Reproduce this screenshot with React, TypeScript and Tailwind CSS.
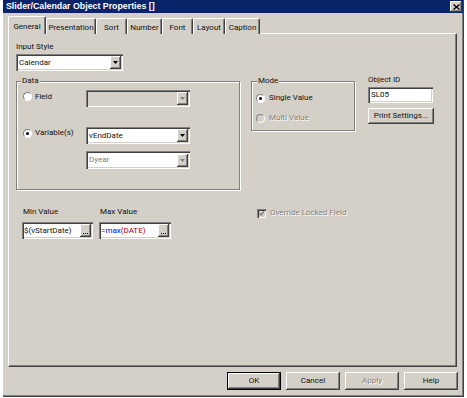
import React from "react";

const raised =
  "bg-[#d4d0c8] shadow-[inset_-1px_-1px_0_#404040,inset_1px_1px_0_#ffffff,inset_-2px_-2px_0_#808080]";
const sunken =
  "shadow-[inset_1px_1px_0_#808080,inset_2px_2px_0_#404040,inset_-1px_-1px_0_#ffffff,inset_-2px_-2px_0_#d4d0c8]";
const etched = "border border-[#808080] shadow-[inset_1px_1px_0_#ffffff,1px_1px_0_#ffffff]";
const disabledText = "text-[#808080] [text-shadow:1px_1px_0_#ffffff]";

function Arrow({ disabled }: { disabled?: boolean }) {
  return (
    <div className={`ml-auto mr-[2px] w-[11px] h-[13px] flex items-center justify-center ${raised}`}>
      <svg width="5" height="3" viewBox="0 0 5 3">
        <polygon points="0,0 5,0 2.5,3" fill={disabled ? "#808080" : "#000000"} />
      </svg>
    </div>
  );
}

function Combo({ value, className, disabled, dim }: { value?: string; className: string; disabled?: boolean; dim?: boolean }) {
  return (
    <div className={`flex items-center ${sunken} ${className}`}>
      <span className={`pl-[3px] ${dim ? "text-[#808080]" : ""}`}>{value}</span>
      <Arrow disabled={disabled} />
    </div>
  );
}

function Radio({ checked, disabled }: { checked?: boolean; disabled?: boolean }) {
  return (
    <div
      className={`w-[9px] h-[9px] rounded-full border border-t-[#808080] border-l-[#808080] border-r-white border-b-white flex items-center justify-center ${
        disabled ? "bg-[#d4d0c8]" : "bg-white"
      }`}
    >
      {checked && <div className="w-[3px] h-[3px] rounded-full bg-black" />}
    </div>
  );
}

function Dots() {
  return (
    <div className={`ml-auto mr-[2px] w-[11px] h-[13px] flex items-end justify-center gap-px pb-[3px] ${raised}`}>
      <span className="w-px h-px bg-black" />
      <span className="w-px h-px bg-black" />
      <span className="w-px h-px bg-black" />
    </div>
  );
}

function Btn({ label, primary, disabled }: { label: string; primary?: boolean; disabled?: boolean }) {
  return (
    <div
      className={`w-[54px] h-[18px] flex items-center justify-center ${raised} ${
        primary ? "border border-black" : ""
      } ${disabled ? disabledText : ""}`}
    >
      {label}
    </div>
  );
}

const tabs = [
  { label: "General", cls: "w-[38px]" },
  { label: "Presentation", cls: "w-[50px]" },
  { label: "Sort", cls: "w-[31px]" },
  { label: "Number", cls: "w-[35px]" },
  { label: "Font", cls: "w-[31px]" },
  { label: "Layout", cls: "w-[32px]" },
  { label: "Caption", cls: "w-[35px]" },
];

export default function App() {
  return (
    <div className="w-[467px] h-[398px] bg-white overflow-hidden font-['Roboto',Arial,sans-serif] text-[8px] leading-[10px] text-[#111]">
      <div className="ml-[3px] w-[461px] h-[397px] bg-[#d4d0c8] border-r border-b border-[#404040] shadow-[inset_-1px_-1px_0_#808080] flex flex-col">
        {/* Title bar */}
        <div className="h-[13px] bg-[#0a246a] flex items-center pl-[3px] pr-[1px]">
          <span className="text-white font-bold text-[8.8px] leading-[11px] font-['Liberation_Sans',Arial,sans-serif]">
            Slider/Calendar Object Properties []
          </span>
          <div className={`ml-auto w-[12px] h-[11px] flex items-center justify-center ${raised}`}>
            <svg width="7" height="6" viewBox="0 0 7 6">
              <path d="M0.5 0.5 L6.5 5.5 M6.5 0.5 L0.5 5.5" stroke="#000" strokeWidth="1.4" />
            </svg>
          </div>
        </div>

        <div className="pl-[5px] pt-[3px]">
          {/* Tabs */}
          <div className="flex items-end h-[18px]">
            {tabs.map((t, i) => (
              <div
                key={t.label}
                className={`${t.cls} flex items-center justify-center border-t border-l border-white border-r border-r-[#404040] rounded-t-[2px] shadow-[inset_-1px_0_0_#808080] bg-[#d4d0c8] ${
                  i === 0 ? "relative z-10 h-[18px] pt-[3px]" : "h-[16px] pt-[3px]"
                }`}
              >
                {t.label}
              </div>
            ))}
          </div>

          {/* Panel */}
          <div className="w-[449px] h-[334px] -mt-px border-t border-l border-white border-r border-b border-r-[#404040] border-b-[#404040] shadow-[inset_-1px_-1px_0_#808080] pl-[7px] pt-[8px]">
            <div>Input Style</div>
            <Combo value="Calendar" className="mt-[2px] w-[107px] h-[17px] bg-white" />

            <div className="flex items-start mt-[10px]">
              {/* Data group */}
              <div className={`relative w-[224px] h-[109px] ${etched}`}>
                <span className="absolute left-[4px] -top-[6px] px-px bg-[#d4d0c8]">Data</span>
                <div className="flex items-center mt-[8px] pl-[6px]">
                  <div className="w-[63px] flex items-center mb-[4px]">
                    <Radio />
                    <span className="ml-[3px]">Field</span>
                  </div>
                  <Combo className="w-[104px] h-[17px] bg-[#d4d0c8]" disabled />
                </div>
                <div className="flex items-center mt-[20px] pl-[6px]">
                  <div className="w-[63px] flex items-center mb-[5px]">
                    <Radio checked />
                    <span className="ml-[3px]">Variable(s)</span>
                  </div>
                  <Combo value="vEndDate" className="w-[104px] h-[17px] bg-white" />
                </div>
                <Combo value="Dyear" className="mt-[7px] ml-[69px] w-[104px] h-[18px] bg-white" disabled dim />
              </div>

              {/* Mode group */}
              <div className={`relative ml-[11px] w-[104px] h-[50px] ${etched}`}>
                <span className="absolute left-[5px] -top-[6px] px-px bg-[#d4d0c8]">Mode</span>
                <div className="flex items-center h-[10px] mt-[11px] pl-[4px]">
                  <Radio checked />
                  <span className="ml-[4px]">Single Value</span>
                </div>
                <div className="flex items-center h-[10px] mt-[10px] pl-[4px]">
                  <Radio disabled />
                  <span className={`ml-[4px] ${disabledText}`}>Multi Value</span>
                </div>
              </div>

              {/* Object ID */}
              <div className="ml-[13px] -mt-[6px] flex flex-col">
                <span>Object ID</span>
                <div className={`mt-[2px] w-[65px] h-[16px] bg-white flex items-center pl-[3px] ${sunken}`}>SL05</div>
                <div className={`mt-[5px] w-[66px] h-[16px] flex items-center justify-center ${raised}`}>Print Settings...</div>
              </div>
            </div>

            {/* Min / Max / Override */}
            <div className="flex items-start mt-[17px] ml-[6px]">
              <div className="w-[71px] flex flex-col">
                <span className="pl-px">Min Value</span>
                <div className={`mt-[5px] h-[17px] bg-white flex items-center pl-[2px] ${sunken}`}>
                  <span>$(vStartDate)</span>
                  <Dots />
                </div>
              </div>
              <div className="ml-[6px] w-[72px] flex flex-col">
                <span className="pl-px">Max Value</span>
                <div className={`mt-[5px] h-[17px] bg-white flex items-center pl-[2px] ${sunken}`}>
                  <span>
                    =<span className="text-[#0000ff]">max</span>
                    <span className="text-[#b00000]">(DATE)</span>
                  </span>
                  <Dots />
                </div>
              </div>
              <div className="ml-[86px] mt-[1px] flex items-center h-[10px]">
                <div className={`w-[9px] h-[9px] bg-[#d4d0c8] flex items-center justify-center ${sunken}`}>
                  <svg width="7" height="7" viewBox="0 0 7 7">
                    <path d="M1 3 L3 5 L6 1.5" stroke="#808080" strokeWidth="1.3" fill="none" />
                  </svg>
                </div>
                <span className={`ml-[4px] ${disabledText}`}>Override Locked Field</span>
              </div>
            </div>
          </div>

          {/* Buttons */}
          <div className="w-[450px] mt-[5px] flex justify-end gap-[5px]">
            <Btn label="OK" primary />
            <Btn label="Cancel" />
            <Btn label="Apply" disabled />
            <Btn label="Help" />
          </div>
        </div>
      </div>
    </div>
  );
}
